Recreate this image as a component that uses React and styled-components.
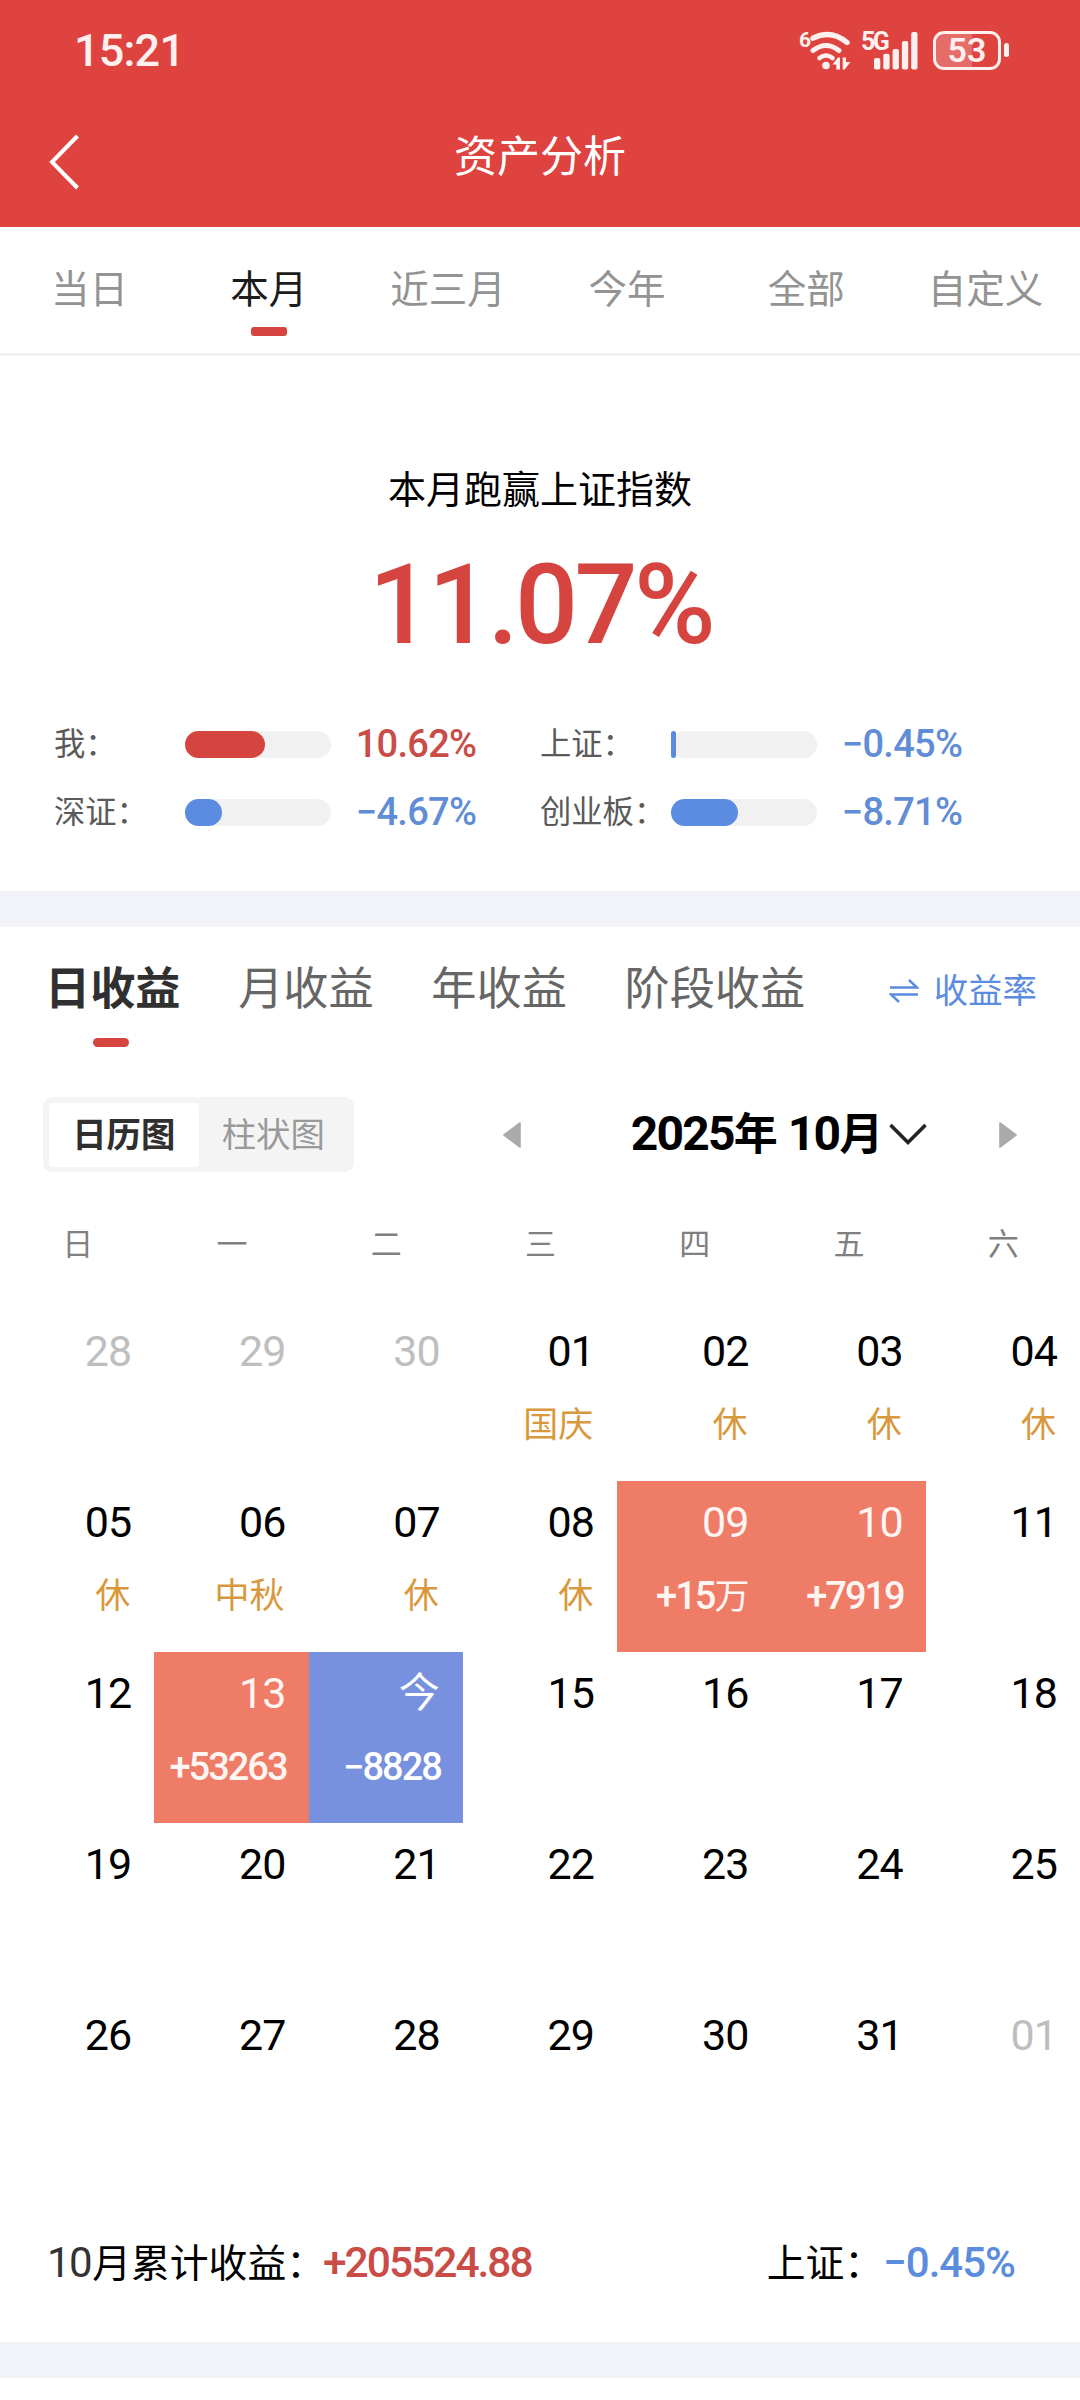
import React from "react";
import styled, { createGlobalStyle } from "styled-components";

const RED = "#d6443f";
const BLUE = "#5b8cdd";

const GlobalStyle = createGlobalStyle`
  body {
    margin: 0;
    background: #fff;
    font-family: Roboto, "Noto Sans CJK SC", sans-serif;
    color: #000;
  }
  * { box-sizing: border-box; }
`;

const Screen = styled.div`
  width: 1080px;
  height: 2400px;
  overflow: hidden;
  background: #fff;
  display: flex;
  flex-direction: column;
`;

/* ---------- header ---------- */
const Header = styled.header`
  height: 227px;
  flex: none;
  background: #de433f;
  color: #fff;
`;

const StatusBar = styled.div`
  height: 102px;
  display: flex;
  align-items: center;
  justify-content: space-between;
  padding: 0 71px 0 74px;
  color: #fff0f0;
`;

const Clock = styled.div`
  font-size: 45px;
  font-weight: 500;
  line-height: 50px;
  letter-spacing: -0.8px;
`;

const StatusIcons = styled.div`
  display: flex;
  align-items: flex-start;
  height: 40px;
`;

const NetLabel = styled.span`
  font-size: ${(p) => p.$size}px;
  font-weight: 700;
  line-height: 20px;
  width: ${(p) => p.$width}px;
  letter-spacing: ${(p) => p.$ls || 0}px;
  margin-top: ${(p) => p.$top || 0}px;
  white-space: nowrap;
`;

const WifiIcon = styled.svg`
  display: block;
  margin-right: 10px;
`;

const SignalIcon = styled.svg`
  display: block;
  margin-left: -12px;
  margin-right: 15px;
`;

const Battery = styled.div`
  width: 68px;
  height: 39px;
  border: 3.5px solid #fff0f0;
  border-radius: 11px;
  background: linear-gradient(to right, #e66c6a 58%, transparent 58%);
  font-size: 34px;
  font-weight: 600;
  line-height: 33px;
  text-align: center;
`;

const BatteryTip = styled.div`
  width: 5px;
  height: 14px;
  margin: 12px 0 0 3px;
  border-radius: 2.5px;
  background: #fff0f0;
`;

const NavBar = styled.div`
  height: 107px;
  display: grid;
  grid-template-columns: 160px 1fr 160px;
  align-items: center;
`;

const BackButton = styled.div`
  padding: 13px 0 0 48px;
  line-height: 0;
`;

const Title = styled.h1`
  margin: 0;
  font-size: 43px;
  font-weight: 400;
  line-height: 60px;
  text-align: center;
  padding-top: 3px;
`;

/* ---------- period tabs ---------- */
const PeriodTabs = styled.nav`
  height: 129px;
  flex: none;
  display: flex;
  padding-right: 5px;
  border-bottom: 3px solid #f1f1f1;
`;

const PeriodTab = styled.div`
  flex: 1;
  display: flex;
  flex-direction: column;
  align-items: center;
  padding-top: 33px;
  font-size: 38.5px;
  line-height: 60px;
  color: ${(p) => (p.$active ? "#1c1c1c" : "#939393")};
  white-space: nowrap;
`;

const TabLabel = styled.span`
  font-weight: 400;
`;

const Marker = styled.i`
  display: block;
  width: 36px;
  height: 9px;
  margin-top: ${(p) => p.$top}px;
  margin-right: ${(p) => p.$shift || 0}px;
  border-radius: ${(p) => p.$radius}px;
  background: ${RED};
`;

/* ---------- summary ---------- */
const Summary = styled.section`
  height: 535px;
  flex: none;
`;

const SummaryCaption = styled.div`
  padding-top: 104px;
  font-size: 38px;
  line-height: 60px;
  text-align: center;
`;

const SummaryRate = styled.div`
  padding-left: 1px;
  margin-top: 25px;
  font-size: 111px;
  font-weight: 500;
  line-height: 120px;
  letter-spacing: -3.6px;
  text-align: center;
  color: ${RED};
`;

const StatGrid = styled.div`
  display: grid;
  grid-template-columns: 486px 1fr;
  grid-auto-rows: 68px;
  padding: 45px 0 0 54px;
`;

const Stat = styled.div`
  display: flex;
  align-items: center;
`;

const StatLabel = styled.span`
  width: 131px;
  padding-top: 1px;
  font-size: 31.3px;
  line-height: 40px;
  color: #5a5a5a;
  white-space: nowrap;
`;

const Track = styled.span`
  width: 146px;
  height: 27px;
  border-radius: 14px;
  background: #f1f1f1;
`;

const TrackFill = styled.i`
  display: block;
  height: 27px;
  border-radius: 14px;
  background: ${(p) => (p.$up ? RED : "#5b8ce2")};
`;

const StatValue = styled.span`
  width: 157px;
  padding-left: 13px;
  font-size: 38px;
  font-weight: 500;
  line-height: 40px;
  letter-spacing: -0.7px;
  text-align: center;
  white-space: nowrap;
  color: ${(p) => (p.$up ? "#c94c47" : "#5f8dd6")};
`;

const Band = styled.div`
  height: 36px;
  flex: none;
  background: #f2f3f8;
`;

/* ---------- earnings ---------- */
const EarningsTabs = styled.div`
  height: 170px;
  flex: none;
  display: flex;
  align-items: flex-start;
  padding: 33px 43px 0 45px;
`;

const EarningsTab = styled.div`
  display: flex;
  flex-direction: column;
  align-items: center;
  margin-right: 57.6px;
  font-size: 45.2px;
  line-height: 60px;
  font-weight: ${(p) => (p.$active ? 700 : 400)};
  color: ${(p) => (p.$active ? "#303030" : "#666")};
  white-space: nowrap;
`;

const SwitchLink = styled.div`
  margin-left: auto;
  display: flex;
  align-items: center;
  gap: 15px;
  font-size: 34.4px;
  line-height: 62px;
  color: ${BLUE};
  white-space: nowrap;
`;

const Toolbar = styled.div`
  height: 75px;
  flex: none;
  display: flex;
  align-items: center;
  padding: 0 63px 0 43px;
`;

const Segmented = styled.div`
  width: 311px;
  height: 75px;
  padding: 6px;
  display: flex;
  border-radius: 9px;
  background: #f4f4f4;
`;

const Segment = styled.div`
  width: 150px;
  height: 64px;
  border-radius: 4px;
  font-size: 34.4px;
  line-height: 65px;
  text-align: center;
  font-weight: ${(p) => (p.$active ? 600 : 400)};
  color: ${(p) => (p.$active ? "#2f2f2f" : "#999")};
  background: ${(p) => (p.$active ? "#fff" : "transparent")};
`;

const MonthSwitcher = styled.div`
  flex: 1;
  display: flex;
  align-items: center;
  justify-content: space-between;
  padding-left: 149px;
`;

const MonthLabel = styled.div`
  display: flex;
  align-items: center;
  gap: 6px;
  margin-left: 38px;
  font-size: 44px;
  font-weight: 700;
  line-height: 60px;
  word-spacing: -1px;
  white-space: nowrap;
`;

const Digits = styled.span`
  font-size: ${(p) => p.$size}px;
  letter-spacing: ${(p) => p.$ls}px;
  font-weight: ${(p) => p.$weight || "inherit"};
  color: ${(p) => p.$color || "inherit"};
  margin-left: ${(p) => p.$left || 0}px;
  margin-right: ${(p) => p.$right || 0}px;
`;

const WeekRow = styled.div`
  height: 138px;
  flex: none;
  display: grid;
  grid-template-columns: repeat(7, 1fr);
  padding-top: 43px;
`;

const Weekday = styled.div`
  font-size: 31px;
  line-height: 60px;
  text-align: center;
  color: #808080;
  padding-left: 1px;
`;

const Calendar = styled.div`
  flex: none;
  display: grid;
  grid-template-columns: repeat(7, 1fr);
  grid-auto-rows: 171px;
`;

const cellColors = {
  gain: { bg: "#ef7c67", fg: "#fff6f3" },
  loss: { bg: "#7791de", fg: "#fff" },
  muted: { bg: "transparent", fg: "#bebebe" },
  plain: { bg: "transparent", fg: "#000" },
};

const Cell = styled.div`
  padding: 11px 22px 0 0;
  text-align: right;
  color: ${(p) => cellColors[p.$kind].fg};
  background: ${(p) => cellColors[p.$kind].bg};
`;

const DayNumber = styled.div`
  font-size: ${(p) => (p.$cjk ? 41 : 43)}px;
  line-height: 60px;
  padding-right: 1px;
  letter-spacing: ${(p) => (p.$cjk ? 0 : -0.9)}px;
`;

const Note = styled.div`
  margin-top: 15px;
  font-size: 35px;
  line-height: 60px;
  padding-right: 2px;
  color: #d9983b;
`;

const Amount = styled.div`
  margin-top: 14px;
  font-size: 35px;
  line-height: 60px;
  white-space: nowrap;
`;

const Footer = styled.div`
  height: 177px;
  flex: none;
  display: flex;
  justify-content: space-between;
  align-items: flex-start;
  padding: 68px 65px 0 47px;
  font-size: 38.8px;
  line-height: 60px;
  white-space: nowrap;
`;

const FooterItem = styled.div`
  display: flex;
  align-items: baseline;
`;

const PERIODS = ["当日", "本月", "近三月", "今年", "全部", "自定义"];

const STATS = [
  { label: "我：", value: "10.62%", width: 80, up: true },
  { label: "上证：", value: "−0.45%", width: 5 },
  { label: "深证：", value: "−4.67%", width: 37 },
  { label: "创业板：", value: "−8.71%", width: 67 },
];

const EARNINGS = ["日收益", "月收益", "年收益", "阶段收益"];
const WEEK = ["日", "一", "二", "三", "四", "五", "六"];

const DAYS = [
  { d: "28", kind: "muted" },
  { d: "29", kind: "muted" },
  { d: "30", kind: "muted" },
  { d: "01", note: "国庆" },
  { d: "02", note: "休" },
  { d: "03", note: "休" },
  { d: "04", note: "休" },
  { d: "05", note: "休" },
  { d: "06", note: "中秋" },
  { d: "07", note: "休" },
  { d: "08", note: "休" },
  { d: "09", kind: "gain", amount: "+15", unit: "万" },
  { d: "10", kind: "gain", amount: "+7919" },
  { d: "11" },
  { d: "12" },
  { d: "13", kind: "gain", amount: "+53263" },
  { d: "今", kind: "loss", amount: "−8828" },
  ...Array.from({ length: 17 }, (_, i) => ({ d: String(15 + i) })),
  { d: "01", kind: "muted" },
];

const Triangle = ({ flip }) => (
  <svg width="18" height="26" viewBox="0 0 18 26">
    <path
      d={flip ? "M1 1 L17 13 L1 25 Z" : "M17 1 L1 13 L17 25 Z"}
      fill="#aaa"
      stroke="#aaa"
      strokeWidth="1.6"
      strokeLinejoin="round"
    />
  </svg>
);

export default function App() {
  return (
    <Screen>
      <GlobalStyle />
      <Header>
        <StatusBar>
          <Clock>15:21</Clock>
          <StatusIcons>
            <NetLabel $size={21} $width={11} $top={-1}>6</NetLabel>
            <WifiIcon width="41" height="40" viewBox="811 31 41 40" fill="none" stroke="#fff0f0" strokeLinecap="round">
              <path d="M814 38.2 Q832 29 848 42.5" strokeWidth="5.4" />
              <path d="M814 50.5 Q827 40.5 840 50.5" strokeWidth="5" />
              <path d="M820.5 58 Q827 53 833.5 58" strokeWidth="4.6" />
              <circle cx="827" cy="65.5" r="3.8" fill="#fff0f0" stroke="none" />
              <path d="M833.5 64.5 L839 57.5 H841 V69.5 H837.3 V64.5 Z" fill="#fff0f0" stroke="none" />
              <path d="M843.7 57.5 H847 V62 H851.5 L845.7 69.5 H843.7 Z" fill="#fff0f0" stroke="none" />
            </WifiIcon>
            <NetLabel $size={25} $width={25} $ls={-2.5} $top={1}>5G</NetLabel>
            <SignalIcon width="44" height="40" viewBox="875 31 44 40" fill="#fff0f0">
              <rect x="875" y="58" width="6.3" height="11.5" rx="2" />
              <rect x="884.3" y="53.7" width="6.3" height="15.8" rx="2" />
              <rect x="893.6" y="49" width="6.3" height="20.5" rx="2" />
              <rect x="902.9" y="41" width="6.3" height="28.5" rx="2" />
              <rect x="912.2" y="32" width="6.3" height="37.5" rx="2" />
            </SignalIcon>
            <Battery>53</Battery>
            <BatteryTip />
          </StatusIcons>
        </StatusBar>
        <NavBar>
          <BackButton>
            <svg width="32" height="56" viewBox="0 0 32 56" fill="none" stroke="#fff" strokeWidth="4">
              <path d="M29.5 2 L4 28 L29.5 54" />
            </svg>
          </BackButton>
          <Title>资产分析</Title>
        </NavBar>
      </Header>

      <PeriodTabs>
        {PERIODS.map((p, i) => (
          <PeriodTab key={p} $active={i === 1}>
            <TabLabel>{p}</TabLabel>
            {i === 1 && <Marker $top={7} $radius={3} />}
          </PeriodTab>
        ))}
      </PeriodTabs>

      <Summary>
        <SummaryCaption>本月跑赢上证指数</SummaryCaption>
        <SummaryRate>11.07%</SummaryRate>
        <StatGrid>
          {STATS.map((s) => (
            <Stat key={s.label}>
              <StatLabel>{s.label}</StatLabel>
              <Track>
                <TrackFill $up={s.up} style={{ width: s.width }} />
              </Track>
              <StatValue $up={s.up}>{s.value}</StatValue>
            </Stat>
          ))}
        </StatGrid>
      </Summary>

      <Band />

      <EarningsTabs>
        {EARNINGS.map((t, i) => (
          <EarningsTab key={t} $active={i === 0}>
            {t}
            {i === 0 && <Marker $top={18} $radius={4.5} $shift={3} />}
          </EarningsTab>
        ))}
        <SwitchLink>
          <svg width="30" height="24" viewBox="0 0 30 24" fill="none" stroke={BLUE} strokeWidth="2.4">
            <path d="M1 8.5 H28 L20 1" />
            <path d="M29 15.5 H2 L10 23" />
          </svg>
          收益率
        </SwitchLink>
      </EarningsTabs>

      <Toolbar>
        <Segmented>
          <Segment $active>日历图</Segment>
          <Segment>柱状图</Segment>
        </Segmented>
        <MonthSwitcher>
          <Triangle />
          <MonthLabel>
            <span>
              <Digits $size={48} $ls={-1.8}>2025</Digits>年 <Digits $size={48} $ls={-1.8}>10</Digits>月
            </span>
            <svg width="38" height="24" viewBox="0 0 38 24" fill="none" stroke="#222" strokeWidth="3.6">
              <path d="M1.5 2 L19 19.5 L36.5 2" />
            </svg>
          </MonthLabel>
          <Triangle flip />
        </MonthSwitcher>
      </Toolbar>

      <WeekRow>
        {WEEK.map((w) => (
          <Weekday key={w}>{w}</Weekday>
        ))}
      </WeekRow>

      <Calendar>
        {DAYS.map((c, i) => (
          <Cell key={i} $kind={c.kind || "plain"}>
            <DayNumber $cjk={c.d === "今"}>{c.d}</DayNumber>
            {c.note && <Note>{c.note}</Note>}
            {c.amount && (
              <Amount>
                <Digits $size={38} $ls={-2} $weight={500}>{c.amount}</Digits>
                {c.unit}
              </Amount>
            )}
          </Cell>
        ))}
      </Calendar>

      <Footer>
        <FooterItem>
          <Digits $size={42} $ls={-1.5} $color="#333" $right={1}>10</Digits>
          月累计收益：
          <Digits $size={42.5} $ls={-2} $weight={500} $color="#c94c47" $left={-2}>+205524.88</Digits>
        </FooterItem>
        <FooterItem>
          上证：
          <Digits $size={42} $ls={-1} $weight={500} $color={BLUE}>−0.45%</Digits>
        </FooterItem>
      </Footer>
      <Band />
    </Screen>
  );
}
